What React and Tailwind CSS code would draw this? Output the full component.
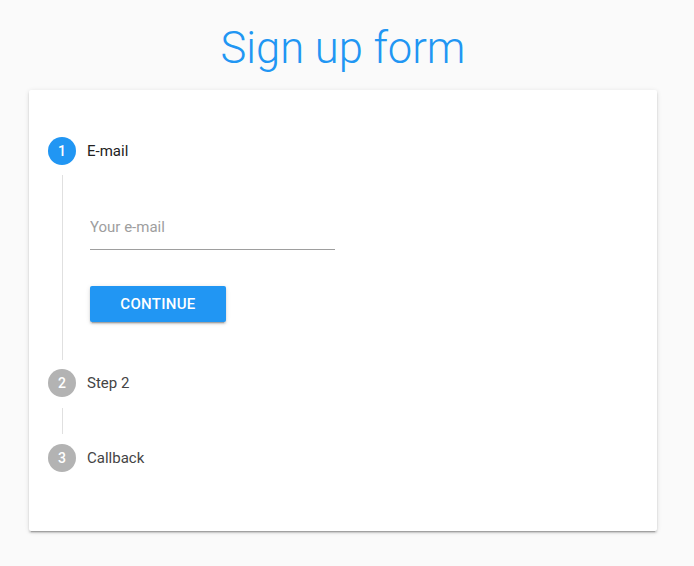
function StepHeader({ n, label, active }) {
  return (
    <div className="flex h-[28px] items-center">
      <div
        className={
          active
            ? "flex h-[28px] w-[28px] items-center justify-center rounded-full bg-[#2196f3] text-[14px] font-medium text-white"
            : "flex h-[28px] w-[28px] items-center justify-center rounded-full bg-[#b3b3b3] text-[14px] font-medium text-white"
        }
      >
        {n}
      </div>
      <span className={active ? "ml-[11px] text-[15px] text-[#222222]" : "ml-[11px] text-[15px] text-[#444444]"}>
        {label}
      </span>
    </div>
  )
}

export default function App() {
  return (
    <div className="min-h-screen bg-[#fafafa] pl-[29px] pr-[37px] pt-[25px] font-['Roboto',sans-serif]">
      <h1 className="text-center text-[43.5px] font-light leading-[47px] text-[#2196f3]">Sign up form</h1>
      <div className="mt-[18px] rounded-[2px] bg-white pb-[59px] pl-[19px] pt-[47px] shadow-[0_3px_1px_-2px_rgba(0,0,0,0.2),0_2px_2px_0_rgba(0,0,0,0.14),0_1px_5px_0_rgba(0,0,0,0.12)]">
        <StepHeader n={1} label="E-mail" active />
        <div className="ml-[14px] mt-[10px] border-l border-[#e0e0e0] pb-[38px] pl-[27px] pt-[42px]">
          <input
            type="email"
            placeholder="Your e-mail"
            className="block h-[33px] w-[245px] border-b border-[#9e9e9e] bg-transparent pb-[12px] pt-0 text-[15px] leading-[20px] text-[#212121] outline-none placeholder:text-[#9e9e9e]"
          />
          <button className="mt-[36px] flex h-[36px] w-[136px] items-center justify-center rounded-[2px] bg-[#2196f3] text-[15px] font-medium uppercase tracking-[0.3px] text-white shadow-[0_3px_1px_-2px_rgba(0,0,0,0.2),0_2px_2px_0_rgba(0,0,0,0.14),0_1px_5px_0_rgba(0,0,0,0.12)]">
            Continue
          </button>
        </div>
        <div className="mt-[9px]">
          <StepHeader n={2} label="Step 2" />
        </div>
        <div className="mb-[10px] ml-[14px] mt-[11px] h-[26px] border-l border-[#e0e0e0]" />
        <StepHeader n={3} label="Callback" />
      </div>
    </div>
  )
}
